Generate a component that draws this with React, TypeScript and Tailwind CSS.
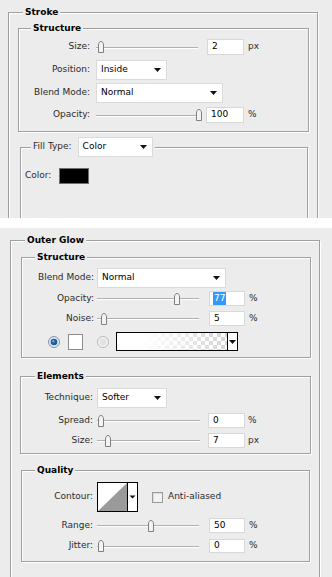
import React from "react";

// etched groupbox border, like the Photoshop layer style dialog
const ETCHED = "border border-[#a0a0a0] shadow-[1px_1px_0_#fff,inset_1px_1px_0_#fff]";
const LEGEND = "px-[2px] bg-[#ececec] text-[9px] leading-[13px] font-bold text-black";

function DropArrow() {
  return (
    <svg width="7" height="4" viewBox="0 0 7 4" className="shrink-0">
      <path d="M0 0H7L3.5 4Z" fill="#111" />
    </svg>
  );
}

function Select({ value, className }: { value: string; className: string }) {
  return (
    <div className={`flex h-[20px] items-center justify-between border border-[#dadada] bg-white pl-[4px] pr-[5px] text-black ${className}`}>
      <span>{value}</span>
      <DropArrow />
    </div>
  );
}

function Thumb() {
  return (
    <svg width="8" height="12" viewBox="0 0 8 12">
      <path d="M1.5 11.5V4C1.5 2 2.5 0.5 4 0.5C5.5 0.5 6.5 2 6.5 4V11.5Z" fill="#f4f4f4" stroke="#7f7f7f" />
    </svg>
  );
}

function Slider({ thumb, className }: { thumb: string; className: string }) {
  return (
    <div className={`relative flex h-[12px] items-center ${className}`}>
      <div className="h-px w-full bg-[#b0b0b0] shadow-[0_1px_0_#fff]" />
      <div className={`absolute top-0 ${thumb}`}>
        <Thumb />
      </div>
    </div>
  );
}

function NumBox({ value, className, selected }: { value: string; className: string; selected?: boolean }) {
  return (
    <div className={`flex items-center border border-[#d8d8d8] bg-white pl-[3px] text-black ${className}`}>
      {selected ? <span className="bg-[#3399ff] px-px text-white">{value}</span> : <span className="px-px">{value}</span>}
    </div>
  );
}

function Row({
  label,
  lw,
  gap,
  className,
  children,
}: {
  label: string;
  lw: string;
  gap: string;
  className: string;
  children: React.ReactNode;
}) {
  return (
    <div className={`flex items-center ${className}`}>
      <span className={`shrink-0 text-right ${lw}`}>{label}</span>
      <div className={`flex items-center ${gap}`}>{children}</div>
    </div>
  );
}

function Radio({ on }: { on?: boolean }) {
  return on ? (
    <svg width="12" height="12" viewBox="0 0 12 12">
      <circle cx="6" cy="6" r="5.5" fill="#dfe6ee" stroke="#8296ad" />
      <circle cx="6" cy="6" r="3.3" fill="#1f5d99" />
      <circle cx="5.3" cy="5.3" r="1.2" fill="#6aa6df" />
    </svg>
  ) : (
    <svg width="12" height="12" viewBox="0 0 12 12">
      <circle cx="6" cy="6" r="5.5" fill="#f3f3f3" stroke="#b8b8b8" />
      <circle cx="6" cy="6" r="3.4" fill="#e2e2e2" />
    </svg>
  );
}

function ContourBox() {
  return (
    <svg width="41" height="30" viewBox="0 0 41 30">
      <rect x="0.5" y="0.5" width="40" height="29" fill="#fff" stroke="#000" />
      <path d="M1 29L30 1V29Z" fill="#9a9a9a" />
      <path d="M30.5 0.5V29.5" stroke="#000" />
      <path d="M32.5 13.5H38.5L35.5 16.5Z" fill="#111" />
    </svg>
  );
}

export default function App() {
  return (
    <div className="h-[577px] w-[332px] overflow-hidden bg-[#fafafa] font-['DejaVu_Sans',sans-serif] text-[9px] text-[#2b2b2b]">
      {/* Stroke panel */}
      <div className="h-[218px] overflow-hidden bg-[#ececec] pt-[6px]">
        <fieldset className={`ml-[8px] h-[240px] w-[310px] ${ETCHED}`}>
          <legend className={`ml-[14px] ${LEGEND}`}>Stroke</legend>

          <fieldset className={`ml-[9px] mr-[8px] mt-[3px] pb-[8px] ${ETCHED}`}>
            <legend className={`ml-[12px] ${LEGEND}`}>Structure</legend>
            <Row label="Size:" lw="w-[71px]" gap="ml-[6px]" className="mt-[4px] h-[16px]">
              <Slider className="w-[102px]" thumb="left-[1px]" />
              <NumBox value="2" className="ml-[9px] h-[16px] w-[37px]" />
              <span className="ml-[4px]">px</span>
            </Row>
            <Row label="Position:" lw="w-[71px]" gap="ml-[6px]" className="mt-[5px] h-[20px]">
              <Select value="Inside" className="w-[71px]" />
            </Row>
            <Row label="Blend Mode:" lw="w-[71px]" gap="ml-[6px]" className="mt-[3px] h-[20px]">
              <Select value="Normal" className="w-[127px]" />
            </Row>
            <Row label="Opacity:" lw="w-[71px]" gap="ml-[6px]" className="mt-[4px] h-[16px]">
              <Slider className="w-[102px]" thumb="left-[99px]" />
              <NumBox value="100" className="ml-[8px] h-[16px] w-[38px]" />
              <span className="ml-[4px]">%</span>
            </Row>
          </fieldset>

          <fieldset className={`ml-[11px] mr-[9px] mt-[5px] h-[100px] ${ETCHED}`}>
            <legend className="ml-[10px] bg-[#ececec] px-[2px]">
              <div className="flex h-[20px] items-center">
                <span>Fill Type:</span>
                <Select value="Color" className="ml-[6px] w-[75px]" />
              </div>
            </legend>
            <div className="mt-[11px] flex h-[16px] items-center pl-[4px]">
              <span>Color:</span>
              <div className="ml-[8px] h-[16px] w-[30px] border border-[#6f6f6f] bg-black" />
            </div>
          </fieldset>
        </fieldset>
      </div>

      <div className="h-[10px] bg-white" />

      {/* Outer Glow panel */}
      <div className="h-[349px] overflow-hidden bg-[#ececec] pt-[6px]">
        <fieldset className={`ml-[10px] h-[360px] w-[310px] ${ETCHED}`}>
          <legend className={`ml-[14px] ${LEGEND}`}>Outer Glow</legend>

          <fieldset className={`ml-[10px] mr-[8px] mt-[4px] pb-[6px] ${ETCHED}`}>
            <legend className={`ml-[13px] ${LEGEND}`}>Structure</legend>
            <Row label="Blend Mode:" lw="w-[72px]" gap="ml-[3px]" className="mt-[4px] h-[20px]">
              <Select value="Normal" className="w-[129px]" />
            </Row>
            <Row label="Opacity:" lw="w-[72px]" gap="ml-[3px]" className="mt-[3px] h-[15px]">
              <Slider className="w-[102px]" thumb="left-[76px]" />
              <NumBox value="77" selected className="ml-[10px] h-[15px] w-[36px]" />
              <span className="ml-[4px]">%</span>
            </Row>
            <Row label="Noise:" lw="w-[72px]" gap="ml-[3px]" className="mt-[5px] h-[15px]">
              <Slider className="w-[102px]" thumb="left-[3px]" />
              <NumBox value="5" className="ml-[10px] h-[15px] w-[36px]" />
              <span className="ml-[4px]">%</span>
            </Row>
            <div className="mt-[6px] flex h-[19px] items-center pl-[26px]">
              <Radio on />
              <div className="ml-[8px] h-[16px] w-[15px] border border-[#8c8c8c] bg-white" />
              <div className="ml-[14px] flex">
                <Radio />
              </div>
              <div className="ml-[7px] flex h-[19px] w-[122px] border border-black">
                <div className="h-full flex-1 bg-[image:repeating-conic-gradient(#d4d4d4_0%_25%,#ffffff_0%_50%)] bg-[length:8px_8px]">
                  <div className="h-full w-full bg-linear-to-r from-white from-25% to-transparent" />
                </div>
                <div className="flex w-[10px] items-center justify-center border-l border-black bg-white">
                  <DropArrow />
                </div>
              </div>
            </div>
          </fieldset>

          <fieldset className={`ml-[9px] mr-[8px] mt-[12px] pb-[5px] ${ETCHED}`}>
            <legend className={`ml-[14px] ${LEGEND}`}>Elements</legend>
            <Row label="Technique:" lw="w-[72px]" gap="ml-[4px]" className="mt-[5px] h-[20px]">
              <Select value="Softer" className="w-[70px]" />
            </Row>
            <Row label="Spread:" lw="w-[72px]" gap="ml-[4px]" className="mt-[5px] h-[15px]">
              <Slider className="w-[103px]" thumb="left-0" />
              <NumBox value="0" className="ml-[8px] h-[15px] w-[37px]" />
              <span className="ml-[3px]">%</span>
            </Row>
            <Row label="Size:" lw="w-[72px]" gap="ml-[4px]" className="mt-[5px] h-[15px]">
              <Slider className="w-[103px]" thumb="left-[7px]" />
              <NumBox value="7" className="ml-[8px] h-[15px] w-[37px]" />
              <span className="ml-[3px]">px</span>
            </Row>
          </fieldset>

          <fieldset className={`ml-[10px] mr-[9px] mt-[10px] pb-[8px] ${ETCHED}`}>
            <legend className={`ml-[13px] ${LEGEND}`}>Quality</legend>
            <Row label="Contour:" lw="w-[71px]" gap="ml-[4px]" className="mt-[5px] h-[30px]">
              <ContourBox />
              <div className="ml-[14px] h-[11px] w-[11px] border border-[#9a9a9a] bg-[#f2f2f2] shadow-[inset_1px_1px_0_#dcdcdc]" />
              <span className="ml-[5px]">Anti-aliased</span>
            </Row>
            <Row label="Range:" lw="w-[71px]" gap="ml-[4px]" className="mt-[6px] h-[15px]">
              <Slider className="w-[102px]" thumb="left-[50px]" />
              <NumBox value="50" className="ml-[10px] h-[15px] w-[36px]" />
              <span className="ml-[4px]">%</span>
            </Row>
            <Row label="Jitter:" lw="w-[71px]" gap="ml-[4px]" className="mt-[6px] h-[14px]">
              <Slider className="w-[102px]" thumb="left-0" />
              <NumBox value="0" className="ml-[10px] h-[14px] w-[36px]" />
              <span className="ml-[4px]">%</span>
            </Row>
          </fieldset>
        </fieldset>
      </div>
    </div>
  );
}
